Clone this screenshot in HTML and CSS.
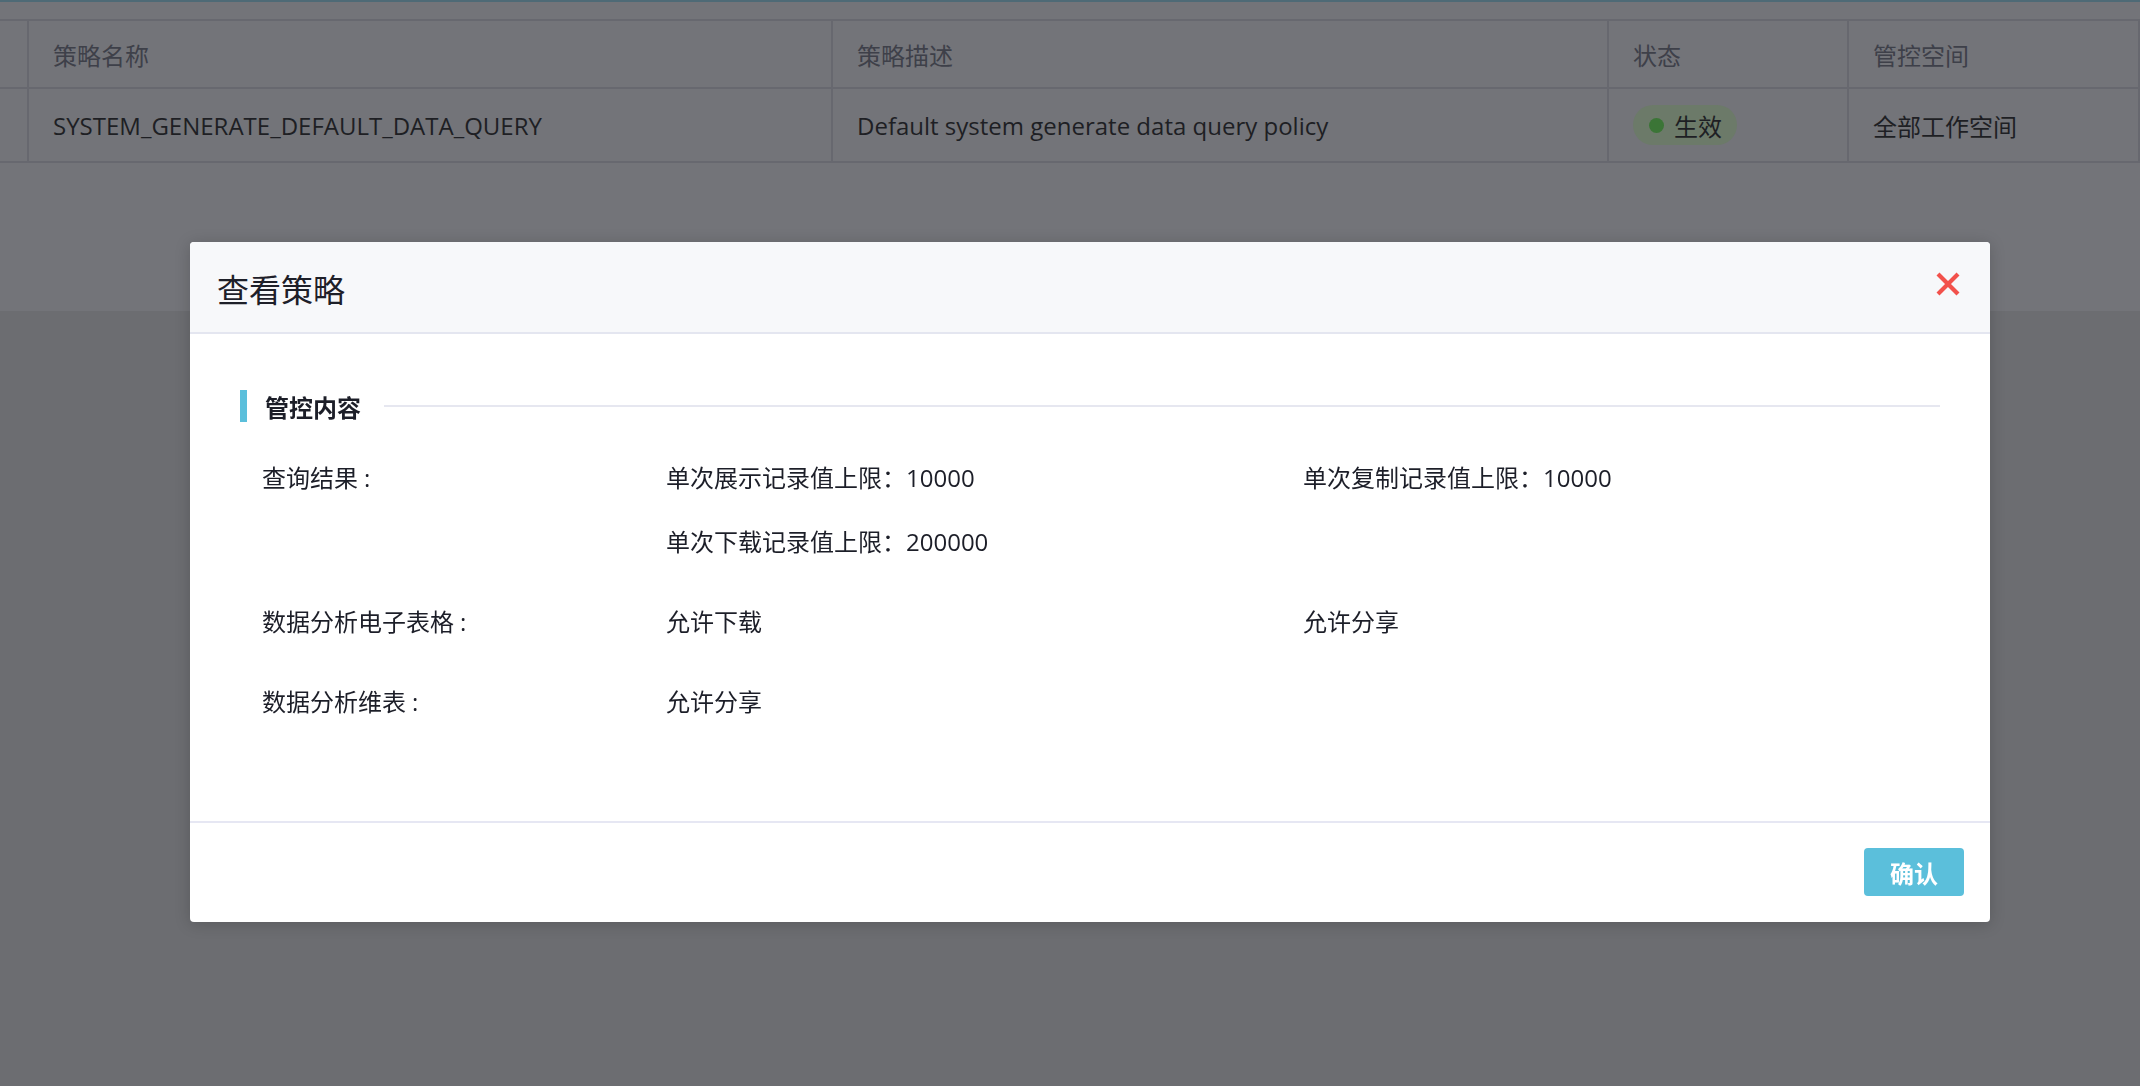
FILE: index.html
```html
<!DOCTYPE html>
<html lang="zh-CN">
<head>
<meta charset="utf-8">
<title>查看策略</title>
<link rel="stylesheet" href="styles.css">
</head>
<body>
<div class="page">
  <div class="top-card">
    <div class="tab-line"></div>
    <div class="table">
      <div class="tr thead">
        <div class="td td-check"></div>
        <div class="td">策略名称</div>
        <div class="td">策略描述</div>
        <div class="td">状态</div>
        <div class="td">管控空间</div>
        <div class="td td-rest"></div>
      </div>
      <div class="tr tbody">
        <div class="td td-check"></div>
        <div class="td">SYSTEM_GENERATE_DEFAULT_DATA_QUERY</div>
        <div class="td">Default system generate data query policy</div>
        <div class="td"><span class="badge"><span class="dot"></span>生效</span></div>
        <div class="td">全部工作空间</div>
        <div class="td td-rest"></div>
      </div>
    </div>
  </div>
</div>

<div class="modal">
  <div class="modal-header">
    <div class="modal-title">查看策略</div>
    <button class="close" aria-label="关闭">
      <svg width="24" height="24" viewBox="0 0 24 24"><path d="M2 2 L22 22 M22 2 L2 22" stroke="#f2514b" stroke-width="4.2" fill="none"/></svg>
    </button>
  </div>
  <div class="modal-body">
    <div class="section-title">
      <span class="bar"></span>
      <span class="section-text">管控内容</span>
      <span class="section-line"></span>
    </div>
    <div class="policy">
      <div class="policy-row">
        <div class="label">查询结果<span class="colon">:</span></div>
        <div class="values">
          <div>单次展示记录值上限：10000</div>
          <div>单次复制记录值上限：10000</div>
          <div>单次下载记录值上限：200000</div>
        </div>
      </div>
      <div class="policy-row">
        <div class="label">数据分析电子表格<span class="colon">:</span></div>
        <div class="values">
          <div>允许下载</div>
          <div>允许分享</div>
        </div>
      </div>
      <div class="policy-row">
        <div class="label">数据分析维表<span class="colon">:</span></div>
        <div class="values">
          <div>允许分享</div>
        </div>
      </div>
    </div>
  </div>
  <div class="modal-footer">
    <button class="btn-primary">确认</button>
  </div>
</div>
</body>
</html>
```
FILE: styles.css
```css
html, body {
  margin: 0;
  padding: 0;
}
body {
  background: #6c6d71;
  font-family: "Open Sans", "Noto Sans CJK SC", sans-serif;
  width: 2140px;
  height: 1086px;
  overflow: hidden;
}
.page {
  width: 2140px;
  height: 1086px;
  background: #6c6d71;
}
.top-card {
  height: 311px;
  background: #737479;
}
.tab-line {
  height: 2px;
  background: #4e6a76;
  margin-bottom: 17px;
}
.table {
  border-top: 2px solid #67686f;
}
.tr {
  display: grid;
  grid-template-columns: 27px 804px 776px 240px 291px 1fr;
  border-bottom: 2px solid #67686f;
}
.thead { height: 66px; }
.tbody { height: 72px; }
.td {
  display: flex;
  align-items: center;
  padding-left: 24px;
  border-left: 2px solid #67686f;
  font-size: 24px;
  white-space: nowrap;
  overflow: hidden;
}
.td-check {
  border-left: none;
  padding-left: 0;
}
.thead .td { color: #3e4049; }
.tbody .td { color: #1e1f24; }
.badge {
  display: inline-flex;
  align-items: center;
  height: 40px;
  padding: 0 15px 0 16px;
  border-radius: 20px;
  background: #6c7a69;
  color: #1e1f24;
  font-size: 24px;
}
.dot {
  width: 15px;
  height: 15px;
  border-radius: 50%;
  background: #3b7536;
  margin-right: 10px;
}

.modal {
  position: fixed;
  left: 190px;
  top: 242px;
  width: 1800px;
  background: #ffffff;
  border-radius: 4px;
  overflow: hidden;
  box-shadow: 0 2px 16px rgba(0, 0, 0, 0.18);
  color: #1c1e28;
}
.modal-header {
  height: 90px;
  background: #f7f8fa;
  border-bottom: 2px solid #e4e6f0;
  display: flex;
  align-items: center;
  justify-content: space-between;
  padding: 0 30px 0 27px;
}
.modal-title {
  font-size: 32px;
  color: #1e2029;
  margin-top: 1px;
}
.close {
  border: none;
  background: transparent;
  padding: 0;
  width: 24px;
  height: 24px;
  margin-top: -6px;
  display: flex;
}
.modal-body {
  padding: 56px 50px 99px;
}
.section-title {
  display: flex;
  align-items: center;
  height: 32px;
}
.bar {
  width: 7px;
  height: 32px;
  background: #5bbfdb;
}
.section-text {
  margin-left: 18px;
  font-size: 24px;
  font-weight: 700;
  color: #1c1e28;
}
.section-line {
  flex: 1;
  height: 2px;
  background: #e6e7f0;
  margin-left: 23px;
}
.policy {
  margin-top: 36px;
  padding-left: 22px;
  display: flex;
  flex-direction: column;
  gap: 40px;
  font-size: 24px;
  line-height: 40px;
}
.policy-row {
  display: grid;
  grid-template-columns: 404px 1fr;
}
.colon {
  margin-left: 6px;
}
.values {
  display: grid;
  grid-template-columns: 637px 637px;
  row-gap: 24px;
}
.modal-footer {
  border-top: 2px solid #e6e7f3;
  padding: 25px 26px 26px;
  display: flex;
  justify-content: flex-end;
}
.btn-primary {
  width: 100px;
  height: 48px;
  border: none;
  border-radius: 4px;
  background: #5bbfdb;
  color: #ffffff;
  font-family: "Noto Sans CJK SC", sans-serif;
  font-size: 24px;
  font-weight: 700;
  padding: 0;
}
```
